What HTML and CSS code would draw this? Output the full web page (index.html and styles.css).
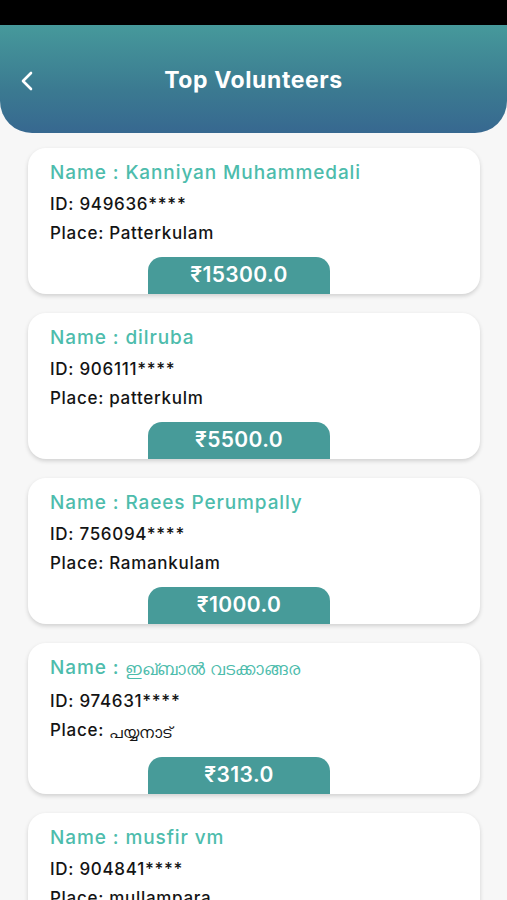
FILE: index.html
```html
<!DOCTYPE html>
<html lang="en">
<head>
    <meta charset="UTF-8">
    <meta name="viewport" content="width=device-width, initial-scale=1.0">
    <title>Top Volunteers</title>
    <link rel="stylesheet" href="styles.css">
</head>
<body>
    <div class="status-bar"></div>

    <header class="top-bar">
        <button class="back-btn" aria-label="Back">
            <svg width="14" height="22" viewBox="0 0 14 22">
                <path d="M11 3 L3 11 L11 19" fill="none" stroke="#ffffff" stroke-width="2.6" stroke-linecap="round" stroke-linejoin="round"/>
            </svg>
        </button>
        <h1>Top Volunteers</h1>
    </header>

    <div class="list">
        <div class="card">
            <p class="name">Name : Kanniyan Muhammedali</p>
            <p class="info id">ID: 949636****</p>
            <p class="info place">Place: Patterkulam</p>
            <div class="amount">₹15300.0</div>
        </div>
        <div class="card">
            <p class="name">Name : dilruba</p>
            <p class="info id">ID: 906111****</p>
            <p class="info place">Place: patterkulm</p>
            <div class="amount">₹5500.0</div>
        </div>
        <div class="card">
            <p class="name">Name : Raees Perumpally</p>
            <p class="info id">ID: 756094****</p>
            <p class="info place">Place: Ramankulam</p>
            <div class="amount">₹1000.0</div>
        </div>
        <div class="card">
            <p class="name">Name : <span class="ml">ഇഖ്ബാൽ വടക്കാങ്ങര</span></p>
            <p class="info id">ID: 974631****</p>
            <p class="info place">Place: <span class="ml ml-place">പയ്യനാട്</span></p>
            <div class="amount">₹313.0</div>
        </div>
        <div class="card">
            <p class="name">Name : musfir vm</p>
            <p class="info id">ID: 904841****</p>
            <p class="info place">Place: mullampara</p>
            <div class="amount">₹250.0</div>
        </div>
    </div>
</body>
</html>
```

FILE: styles.css
```css
/* Global */
body {
    font-family: Inter, "Noto Sans", "DejaVu Sans", sans-serif;
    background-color: #f7f7f7;
    color: #111111;
    margin: 0;
    padding: 0;
    width: 507px;
    height: 900px;
    overflow: hidden;
}

.status-bar {
    height: 25px;
    background-color: #000000;
}

/* Header */
.top-bar {
    height: 108px;
    background: linear-gradient(180deg, #46999b 0%, #3b7a91 60%, #376890 100%);
    border-radius: 0 0 32px 32px;
    display: flex;
    align-items: center;
    justify-content: center;
    position: relative;
}

.top-bar h1 {
    margin: 0;
    color: #ffffff;
    font-size: 23px;
    font-weight: 700;
    letter-spacing: 0.6px;
    transform: translateY(1px);
}

.back-btn {
    position: absolute;
    left: 20px;
    top: 45px;
    background: none;
    border: none;
    padding: 0;
    cursor: pointer;
}

/* Card list */
.list {
    display: flex;
    flex-direction: column;
    gap: 19px;
    padding: 15px 27px 0 28px;
}

.card {
    background-color: #ffffff;
    border-radius: 18px;
    box-shadow: 0 2px 4px rgba(0, 0, 0, 0.16);
    padding: 10px 22px 0;
    overflow: hidden;
}

.card p {
    margin: 0;
}

.name {
    font-size: 19px;
    font-weight: 500;
    line-height: 30px;
    letter-spacing: 0.9px;
    color: #4dbcac;
}

.info {
    font-size: 17px;
    font-weight: 500;
    letter-spacing: 0.7px;
    color: #141414;
}

.id {
    line-height: 33px;
}

.place {
    line-height: 25px;
}

.ml {
    display: inline-block;
    font-weight: 400;
    font-size: 17px;
    letter-spacing: 0;
    line-height: 32px;
    vertical-align: top;
}

.ml-place {
    font-size: 16px;
    line-height: 28px;
}

.amount {
    width: 182px;
    height: 37px;
    margin: 11px 0 0 98px;
    background-color: #479b99;
    border-radius: 14px 14px 0 0;
    color: #ffffff;
    font-size: 21px;
    font-weight: 600;
    letter-spacing: 0.4px;
    line-height: 36px;
    text-align: center;
}
```
